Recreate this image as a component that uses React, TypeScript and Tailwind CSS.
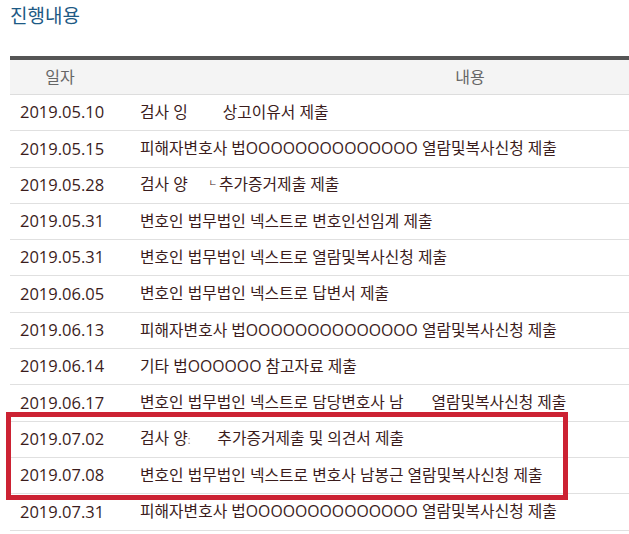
const rows: { date: string; content: React.ReactNode }[] = [
  {
    date: "2019.05.10",
    content: (
      <>
        검사 잉<span className="ml-[35px]">상고이유서 제출</span>
      </>
    ),
  },
  { date: "2019.05.15", content: "피해자변호사 법OOOOOOOOOOOOOO 열람및복사신청 제출" },
  {
    date: "2019.05.28",
    content: (
      <>
        검사 양
        <span className="ml-[21px] text-[9px] align-[4px]">ㄴ</span>
        <span className="ml-[2px]">추가증거제출 제출</span>
      </>
    ),
  },
  { date: "2019.05.31", content: "변호인 법무법인 넥스트로 변호인선임계 제출" },
  { date: "2019.05.31", content: "변호인 법무법인 넥스트로 열람및복사신청 제출" },
  { date: "2019.06.05", content: "변호인 법무법인 넥스트로 답변서 제출" },
  { date: "2019.06.13", content: "피해자변호사 법OOOOOOOOOOOOOO 열람및복사신청 제출" },
  { date: "2019.06.14", content: "기타 법OOOOOO 참고자료 제출" },
  {
    date: "2019.06.17",
    content: (
      <>
        변호인 법무법인 넥스트로 담당변호사 남<span className="ml-[28px]">열람및복사신청 제출</span>
      </>
    ),
  },
  {
    date: "2019.07.02",
    content: (
      <>
        검사 양<span className="text-[10px] text-[#8a7070]">:</span>
        <span className="ml-[27px]">추가증거제출 및 의견서 제출</span>
      </>
    ),
  },
  { date: "2019.07.08", content: "변호인 법무법인 넥스트로 변호사 남봉근 열람및복사신청 제출" },
  { date: "2019.07.31", content: "피해자변호사 법OOOOOOOOOOOOOO 열람및복사신청 제출" },
];

export default function App() {
  return (
    <div
      className="relative w-[629px] h-[534px] overflow-hidden bg-white"
      style={{ fontFamily: '"Open Sans", "Noto Sans CJK KR", sans-serif' }}
    >
      <h2 className="pl-[10px] pt-[3px] text-[19px] leading-[26px] text-[#1d5a85]">진행내용</h2>

      <div className="ml-[10px] mt-[27px] w-[830px] border-t-[4px] border-[#555555]">
        {/* header */}
        <div className="flex h-[35px] items-center bg-[#f4f4f4] border-b border-[#dddddd] text-[16px] text-[#666666]">
          <div className="w-[100px] text-center">일자</div>
          <div className="flex-1 pr-[10px] text-center">내용</div>
        </div>

        {rows.map((r, i) => (
          <div
            key={i}
            className="flex h-[36.3px] items-center border-b border-[#e0e0e0] text-[#3b1c1c]"
          >
            <div className="w-[100px] pl-[10px] whitespace-nowrap text-[16.5px]">{r.date}</div>
            <div className="flex-1 pl-[30px] whitespace-nowrap text-[15.8px]">{r.content}</div>
          </div>
        ))}
      </div>

      {/* red highlight box */}
      <div className="absolute left-[6px] top-[412px] w-[562px] h-[88px] border-[5px] border-[#cc2233]" />
    </div>
  );
}
